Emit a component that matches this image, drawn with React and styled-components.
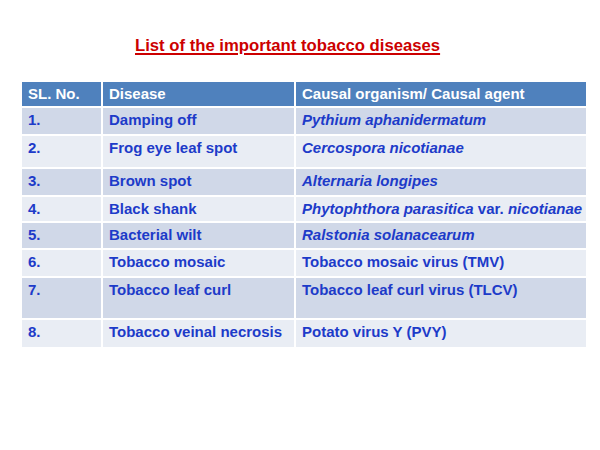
import React from "react";
import styled, { createGlobalStyle } from "styled-components";

const Global = createGlobalStyle`
  html, body { margin: 0; padding: 0; background: #ffffff; }
  body { font-family: "Liberation Sans", Arial, Helvetica, sans-serif; }
`;

const Page = styled.div`
  width: 600px;
  height: 450px;
  box-sizing: border-box;
  padding: 36px 0 0 22px;
  display: flex;
  flex-direction: column;
  align-items: flex-start;
`;

const Title = styled.h1`
  margin: 0 0 27px 113px;
  font-size: 16.7px;
  line-height: 19px;
  font-weight: 700;
  color: #cc0000;
  text-decoration: underline;
  text-decoration-thickness: 1.5px;
  text-underline-offset: 2px;
`;

const Table = styled.div`
  display: grid;
  grid-template-columns: 79px 191px 290px;
  gap: 2px;
  background: #ffffff;
`;

const Cell = styled.div`
  box-sizing: border-box;
  height: ${(p) => p.$h}px;
  padding: 3px 0 0 6px;
  font-size: 15px;
  line-height: 17px;
  font-weight: 700;
  white-space: nowrap;
  color: ${(p) => (p.$head ? "#ffffff" : "#1d3bc9")};
  background: ${(p) =>
    p.$head ? "#4f81bd" : p.$odd ? "#d0d8e8" : "#e9edf4"};
`;

const It = styled.i`
  font-style: italic;
`;

const rows = [
  { h: 26, n: "1.", d: "Damping off", c: <It>Pythium aphanidermatum</It> },
  { h: 31, n: "2.", d: "Frog eye leaf spot", c: <It>Cercospora nicotianae</It> },
  { h: 26, n: "3.", d: "Brown spot", c: <It>Alternaria longipes</It> },
  {
    h: 24,
    n: "4.",
    d: "Black shank",
    c: (
      <>
        <It>Phytophthora parasitica</It> var. <It>nicotianae</It>
      </>
    ),
  },
  { h: 25, n: "5.", d: "Bacterial wilt", c: <It>Ralstonia solanacearum</It> },
  { h: 26, n: "6.", d: "Tobacco mosaic", c: "Tobacco mosaic virus (TMV)" },
  { h: 40, n: "7.", d: "Tobacco leaf curl", c: "Tobacco leaf curl virus (TLCV)" },
  { h: 27, n: "8.", d: "Tobacco veinal necrosis", c: "Potato virus Y (PVY)" },
];

export default function App() {
  return (
    <>
      <Global />
      <Page>
        <Title>List of the important tobacco diseases</Title>
        <Table>
          <Cell $head $h={24}>SL. No.</Cell>
          <Cell $head $h={24}>Disease</Cell>
          <Cell $head $h={24}>Causal organism/ Causal agent</Cell>
          {rows.map((r, i) => (
            <React.Fragment key={r.n}>
              <Cell $h={r.h} $odd={i % 2 === 0}>{r.n}</Cell>
              <Cell $h={r.h} $odd={i % 2 === 0}>{r.d}</Cell>
              <Cell $h={r.h} $odd={i % 2 === 0}>{r.c}</Cell>
            </React.Fragment>
          ))}
        </Table>
      </Page>
    </>
  );
}
